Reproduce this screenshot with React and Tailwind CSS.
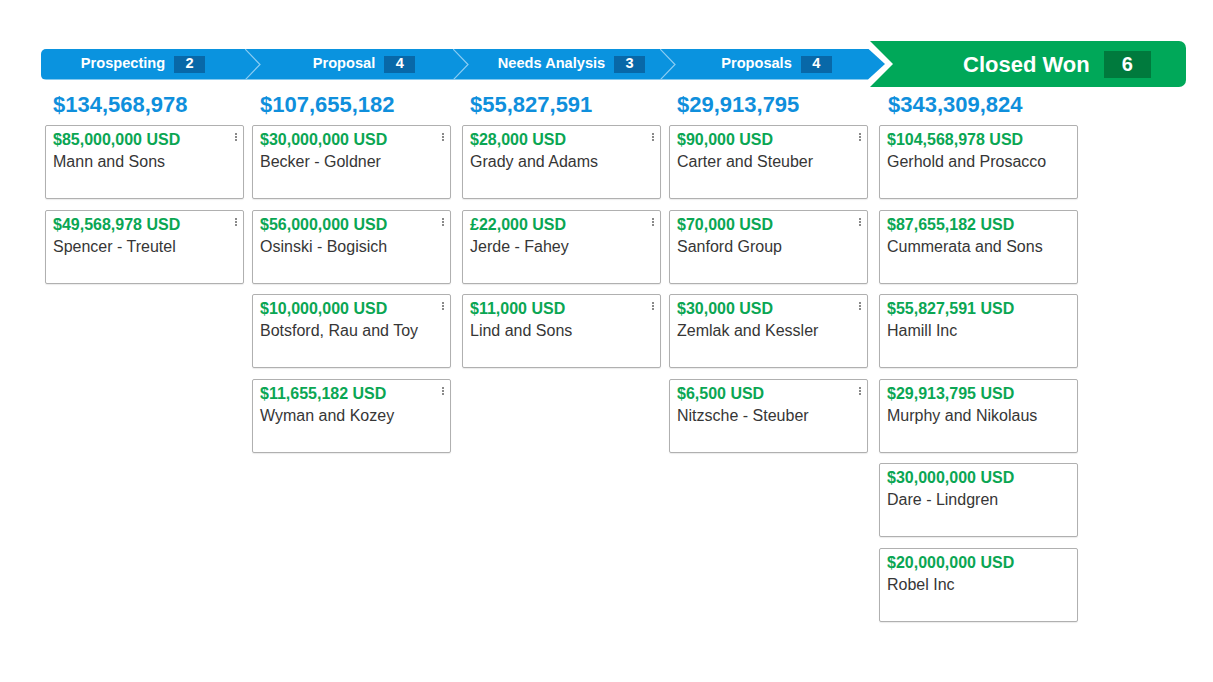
import React from "react";

const stages = [
  { name: "Prospecting", count: 2, box: "w-[204px]", pad: "" },
  { name: "Proposal", count: 4, box: "w-[208px]", pad: "pl-[30px]" },
  { name: "Needs Analysis", count: 3, box: "w-[207px]", pad: "pl-[30px]" },
  { name: "Proposals", count: 4, box: "w-[225px]", pad: "pl-[30px] pr-[22px]" },
];

const columns = [
  {
    total: "$134,568,978",
    width: "w-[207px]",
    menu: true,
    deals: [
      ["$85,000,000 USD", "Mann and Sons"],
      ["$49,568,978 USD", "Spencer - Treutel"],
    ],
  },
  {
    total: "$107,655,182",
    width: "w-[210px]",
    menu: true,
    deals: [
      ["$30,000,000 USD", "Becker - Goldner"],
      ["$56,000,000 USD", "Osinski - Bogisich"],
      ["$10,000,000 USD", "Botsford, Rau and Toy"],
      ["$11,655,182 USD", "Wyman and Kozey"],
    ],
  },
  {
    total: "$55,827,591",
    width: "w-[207px]",
    menu: true,
    deals: [
      ["$28,000 USD", "Grady and Adams"],
      ["£22,000 USD", "Jerde - Fahey"],
      ["$11,000 USD", "Lind and Sons"],
    ],
  },
  {
    total: "$29,913,795",
    width: "w-[210px]",
    menu: true,
    deals: [
      ["$90,000 USD", "Carter and Steuber"],
      ["$70,000 USD", "Sanford Group"],
      ["$30,000 USD", "Zemlak and Kessler"],
      ["$6,500 USD", "Nitzsche - Steuber"],
    ],
  },
  {
    total: "$343,309,824",
    width: "w-[220px]",
    menu: false,
    deals: [
      ["$104,568,978 USD", "Gerhold and Prosacco"],
      ["$87,655,182 USD", "Cummerata and Sons"],
      ["$55,827,591 USD", "Hamill Inc"],
      ["$29,913,795 USD", "Murphy and Nikolaus"],
      ["$30,000,000 USD", "Dare - Lindgren"],
      ["$20,000,000 USD", "Robel Inc"],
    ],
  },
];

function Kebab() {
  return (
    <div className="absolute right-[6px] top-[7px] flex flex-col gap-[1px]">
      <span className="block w-[2px] h-[2px] bg-[#8a8a8a]" />
      <span className="block w-[2px] h-[2px] bg-[#8a8a8a]" />
      <span className="block w-[2px] h-[2px] bg-[#8a8a8a]" />
    </div>
  );
}

function DealCard({ amount, company, menu }) {
  return (
    <div className="relative w-[199px] h-[74px] border border-[#b0b0b0] rounded-[2px] bg-white shadow-[0_1px_1px_rgba(0,0,0,0.08)] px-[7px] pt-[3px]">
      <div className="text-[16px] leading-[22px] font-bold text-[#0aa653]">{amount}</div>
      <div className="text-[16px] leading-[22px] text-[#363636]">{company}</div>
      {menu && <Kebab />}
    </div>
  );
}

export default function App() {
  return (
    <div className="w-[1213px] h-[682px] bg-white overflow-hidden font-['Liberation_Sans',Arial,sans-serif]">
      {/* stage bar */}
      <div className="flex items-center ml-[41px] mt-[41px] h-[46px]">
        <div className="flex w-[844px] h-[31px] bg-[#0a93df] rounded-l-[5px] [clip-path:polygon(0_0,calc(100%_-_17px)_0,100%_50%,calc(100%_-_17px)_100%,0_100%)]">
          {stages.map((s, i) => (
            <div
              key={s.name}
              className={`relative flex items-center justify-center h-full ${s.box} ${s.pad}`}
            >
              {i > 0 && (
                <svg className="absolute left-0 top-0" width="17" height="31" viewBox="0 0 17 31">
                  <polyline points="0,0 15,15.5 0,31" fill="none" stroke="#8ccdf3" strokeWidth="1.2" />
                </svg>
              )}
              <span className="text-white font-bold text-[14.6px]">{s.name}</span>
              <span className="ml-[9px] w-[31px] h-[17px] flex items-center justify-center bg-[#0868a8] text-white font-bold text-[14.6px]">
                {s.count}
              </span>
            </div>
          ))}
        </div>
        <div className="-ml-[15px] w-[316px] h-[46px] bg-[#00a859] rounded-r-[7px] flex items-center pl-[93px] [clip-path:polygon(0_0,100%_0,100%_100%,0_100%,23px_50%)]">
          <span className="text-white font-bold text-[22px]">Closed Won</span>
          <span className="ml-[14px] w-[47px] h-[27px] flex items-center justify-center bg-[#007a3d] text-white font-bold text-[20px]">
            6
          </span>
        </div>
      </div>

      {/* deal columns */}
      <div className="flex ml-[45px] mt-[5px]">
        {columns.map((col, i) => (
          <div key={col.total} className={`${col.width} flex flex-col`}>
            <div className={`h-[26px] leading-[26px] text-[22px] font-bold text-[#0f8fdc] ${i === 4 ? "pl-[9px]" : "pl-[8px]"}`}>
              {col.total}
            </div>
            <div className="mt-[7px] flex flex-col gap-[10.6px]">
              {col.deals.map(([amount, company]) => (
                <DealCard key={company} amount={amount} company={company} menu={col.menu} />
              ))}
            </div>
          </div>
        ))}
      </div>
    </div>
  );
}
